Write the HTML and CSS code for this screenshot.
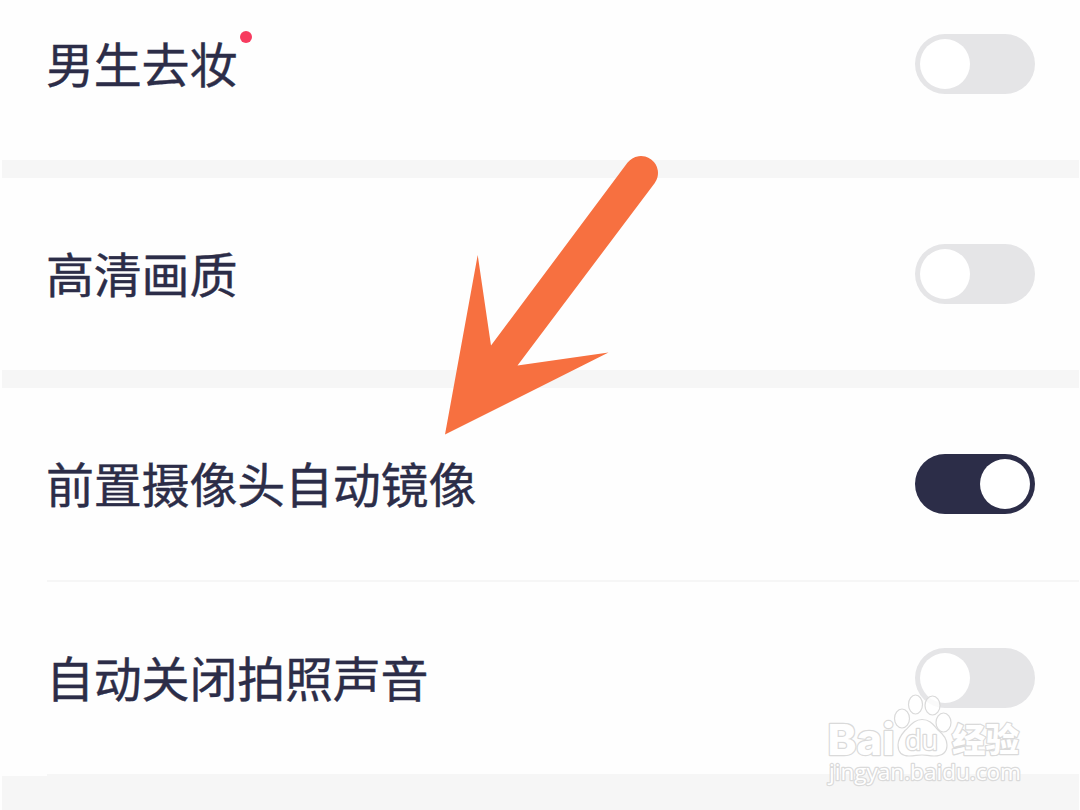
FILE: index.html
```
<!DOCTYPE html>
<html lang="zh-CN">
<head>
	<meta charset="utf-8">
	<title>设置</title>
	<link rel="stylesheet" href="styles.css">
</head>
<body>
	<div class="pagina">
		<div class="grupo primero">
			<div class="fila">
				<span class="texto">男生去妆<i class="punto"></i></span>
				<span class="switch"></span>
			</div>
		</div>
		<div class="grupo">
			<div class="fila">
				<span class="texto">高清画质</span>
				<span class="switch"></span>
			</div>
		</div>
		<div class="grupo">
			<div class="fila linea">
				<span class="texto">前置摄像头自动镜像</span>
				<span class="switch activo"></span>
			</div>
			<div class="fila linea">
				<span class="texto">自动关闭拍照声音</span>
				<span class="switch"></span>
			</div>
		</div>
	</div>

	<svg class="flecha" width="240" height="300" viewBox="430 145 240 300">
		<path fill="#f77040" d="M445 434.500L477.700 255L491 345.500L627.400 162.800A17 17 0 0 1 654.600 183.200L517.500 365.500L608.500 352.500Z"/>
	</svg>

	<svg class="marca" width="220" height="110" viewBox="815 685 220 110">
		<g fill="#fff" stroke="#dadada" stroke-width="1.200">
			<text class="bai" x="827.500" y="754.500" textLength="67" lengthAdjust="spacingAndGlyphs">Bai</text>
			<ellipse cx="902" cy="718.500" rx="7.500" ry="9.500"/>
			<ellipse cx="915.500" cy="704.500" rx="7" ry="9.500"/>
			<ellipse cx="932.500" cy="705.500" rx="7.500" ry="9.500" fill-opacity=".8"/>
			<ellipse cx="943.500" cy="722.500" rx="7.500" ry="9.500"/>
			<path d="M922 719.500C931 719.500 934 726 938 730C943 734 947 739 947 745C947 753 941 756 934 756C929 756 926 755 922 755C918 755 914 756 909 756C902 756 898 752 898 745C898 739 901 735 905 730.500C910 726 914 719.500 922 719.500Z"/>
			<text class="du" x="905" y="750" textLength="33" lengthAdjust="spacingAndGlyphs">du</text>
			<text class="jing" x="952" y="751.500" textLength="67" lengthAdjust="spacingAndGlyphs">经验</text>
			<text class="url" x="829" y="780" textLength="192" lengthAdjust="spacingAndGlyphs">jingyan.baidu.com</text>
		</g>
	</svg>
</body>
</html>
```
FILE: styles.css
```
body
{
	margin: 0;
	background-color: #fefefe;
	overflow: hidden;
	font-family: "Noto Sans CJK SC", sans-serif;
}
.pagina
{
	height: 810px;
	box-sizing: border-box;
	margin: 0 1px 0 2px;
	background-color: #f6f6f6;
	display: flex;
	flex-direction: column;
	gap: 18px;
}
.grupo
{
	background-color: #fefefe;
}
.primero
{
	height: 160px;
	display: flex;
	align-items: flex-end;
}
.primero .fila
{
	flex: 1;
}
.fila
{
	height: 192px;
	flex-shrink: 0;
	margin-left: 45px;
	padding-right: 44px;
	display: flex;
	align-items: center;
	justify-content: space-between;
}
.linea
{
	border-bottom: 2px solid #f6f6f6;
}
.texto
{
	position: relative;
	margin-left: -1px;
	padding-bottom: 4px;
	font-size: 48px;
	line-height: 72px;
	letter-spacing: -0.2px;
	color: #2c2d48;
	-webkit-text-stroke: 0.4px #2c2d48;
}
.punto
{
	position: absolute;
	top: 5px;
	right: -15px;
	width: 12px;
	height: 12px;
	border-radius: 50%;
	background-color: #f73b5f;
}
.switch
{
	width: 120px;
	height: 60px;
	padding: 5px;
	box-sizing: border-box;
	border-radius: 30px;
	background-color: #e5e5e7;
	display: flex;
}
.switch::before
{
	content: "";
	width: 50px;
	height: 50px;
	border-radius: 50%;
	background-color: #fff;
}
.activo
{
	justify-content: flex-end;
	background-color: #2c2d48;
}
.flecha
{
	position: absolute;
	left: 430px;
	top: 145px;
}
.marca
{
	position: absolute;
	left: 815px;
	top: 685px;
}
.marca text
{
	paint-order: stroke;
	stroke-width: 2.4px;
	stroke-linejoin: round;
}
.bai
{
	font: 800 43px Inter, sans-serif;
}
.marca .du
{
	font: 27px "Open Sans", sans-serif;
	stroke-width: 2.6px;
}
.jing
{
	font: 900 33px "Noto Sans CJK SC", sans-serif;
}
.url
{
	font: 22px "Open Sans", sans-serif;
}
```
